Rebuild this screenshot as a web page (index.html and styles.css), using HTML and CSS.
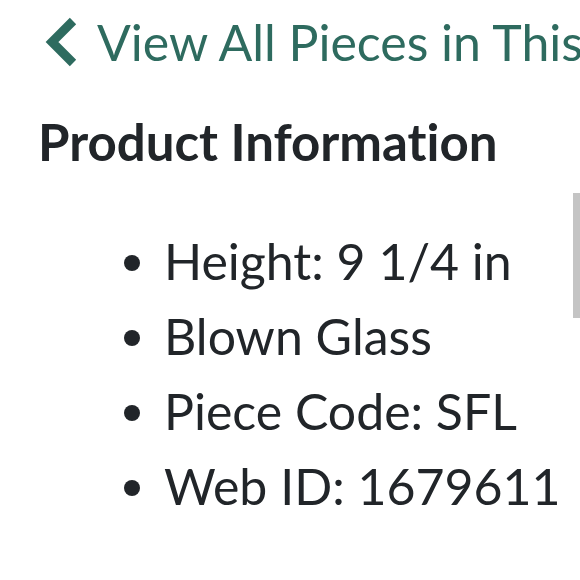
FILE: index.html
```html
<!DOCTYPE html>
<html>
<head>
<meta charset="utf-8">
<link rel="stylesheet" href="styles.css">
</head>
<body>
<div class="page">
  <a class="back" href="#">
    <svg class="chev" viewBox="0 0 34 50" width="34" height="50"><polyline points="29,4 8,25 29,46" fill="none" stroke="#2e6b5f" stroke-width="9"/></svg>
    <span class="back-text">View All Pieces in This Collection</span>
  </a>
  <h2 class="title">Product Information</h2>
  <ul class="info">
    <li>Height: 9 1/4 in</li>
    <li>Blown Glass</li>
    <li>Piece Code: SFL</li>
    <li>Web ID: 1679611</li>
  </ul>
</div>
<div class="scrollbar"></div>
</body>
</html>
```
FILE: styles.css
```css
html, body {
  margin: 0;
  padding: 0;
  background: #fff;
  overflow: hidden;
}
body {
  font-family: Lato, "Noto Sans", sans-serif;
  font-variant-ligatures: none;
  color: #212529;
  width: 580px;
  height: 580px;
  position: relative;
}
.page {
  padding-top: 12px;
}
.back {
  display: flex;
  align-items: center;
  gap: 19px;
  padding-left: 44px;
  color: #2e6b5f;
  text-decoration: none;
  white-space: nowrap;
  overflow: hidden;
  font-size: 50px;
  line-height: 60px;
}
.chev {
  flex: none;
}
.title {
  margin: 40px 0 0 38px;
  font-size: 51px;
  font-weight: 700;
  line-height: 60px;
}
.info {
  margin: 52px 0 0 0;
  padding-left: 164px;
  font-size: 50px;
  line-height: 75px;
  list-style: none;
}
.info li {
  position: relative;
}
.info li::before {
  content: "";
  position: absolute;
  left: -40px;
  top: 31px;
  width: 16px;
  height: 16px;
  border-radius: 50%;
  background: #212529;
}
.scrollbar {
  position: absolute;
  right: 0;
  top: 193px;
  width: 7px;
  height: 125px;
  background: #c4c4c4;
}
```
